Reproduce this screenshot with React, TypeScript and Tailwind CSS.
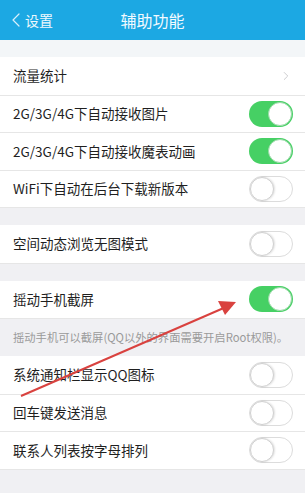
import { ChevronLeft, ChevronRight } from "lucide-react";

type Row = { label: string; kind: "link" | "on" | "off" };

const Toggle = ({ on }: { on: boolean }) =>
  on ? (
    <div className="w-[44px] h-[26px] rounded-full bg-[#46d064] relative shrink-0">
      <div className="absolute right-[1px] top-[1px] w-[24px] h-[24px] rounded-full bg-white border border-[#9bd9a8]" />
    </div>
  ) : (
    <div className="w-[44px] h-[26px] rounded-full bg-white border border-[#dcdcdc] relative shrink-0">
      <div className="absolute left-0 top-0 w-[24px] h-[24px] rounded-full bg-white border border-[#d0d0d0] shadow-[1px_0_2px_rgba(0,0,0,0.12)]" />
    </div>
  );

const Group = ({ rows }: { rows: Row[] }) => (
  <div className="bg-white">
    {rows.map((r, i) => (
      <div
        key={i}
        className={`h-[37.5px] flex items-center justify-between pl-[13px] pr-[12px] ${
          i > 0 ? "border-t border-[#e6e6e6]" : ""
        }`}
      >
        <span className="text-[13.5px] text-[#1f1f1f] leading-none">{r.label}</span>
        {r.kind === "link" ? (
          <ChevronRight size={14} strokeWidth={1.5} className="text-[#c5c5c8]" />
        ) : (
          <Toggle on={r.kind === "on"} />
        )}
      </div>
    ))}
  </div>
);

export default function App() {
  return (
    <div
      className="w-[305px] h-[493px] bg-[#f0f0f3] relative overflow-hidden"
      style={{ fontFamily: '"Noto Sans CJK SC", "Noto Sans", sans-serif' }}
    >
      <div className="h-[40px] bg-[#1ca8e3] flex items-center relative text-white">
        <div className="flex items-center pl-[4px]">
          <ChevronLeft size={24} strokeWidth={1.2} className="text-[#d8f0fb]" />
          <span className="text-[14px] -ml-[3px] text-[#eef8fd]">设置</span>
        </div>
        <div className="absolute inset-0 flex items-center justify-center text-[16px] text-[#f2faff]">
          辅助功能
        </div>
      </div>
      <div className="h-[17px] bg-[#f3f6f8]" />
      <Group
        rows={[
          { label: "流量统计", kind: "link" },
          { label: "2G/3G/4G下自动接收图片", kind: "on" },
          { label: "2G/3G/4G下自动接收魔表动画", kind: "on" },
          { label: "WiFi下自动在后台下载新版本", kind: "off" },
        ]}
      />
      <div className="h-[18px] border-t border-[#e6e6e6]" />
      <Group rows={[{ label: "空间动态浏览无图模式", kind: "off" }]} />
      <div className="h-[18px] border-t border-[#e6e6e6]" />
      <Group rows={[{ label: "摇动手机截屏", kind: "on" }]} />
      <div className="h-[38px] flex items-center pl-[13px] text-[11.3px] text-[#9a9a9a] border-t border-[#e6e6e6]">
        摇动手机可以截屏(QQ以外的界面需要开启Root权限)。
      </div>
      <Group
        rows={[
          { label: "系统通知栏显示QQ图标", kind: "off" },
          { label: "回车键发送消息", kind: "off" },
          { label: "联系人列表按字母排列", kind: "off" },
        ]}
      />
      <div className="border-t border-[#e6e6e6]" />

      <svg className="absolute left-0 top-0 pointer-events-none" width="305" height="493">
        <line x1="21" y1="396" x2="226" y2="307" stroke="#d9423f" strokeWidth="2" />
        <polygon points="236,302 218,301 225,315" fill="#d9423f" />
      </svg>
    </div>
  );
}
